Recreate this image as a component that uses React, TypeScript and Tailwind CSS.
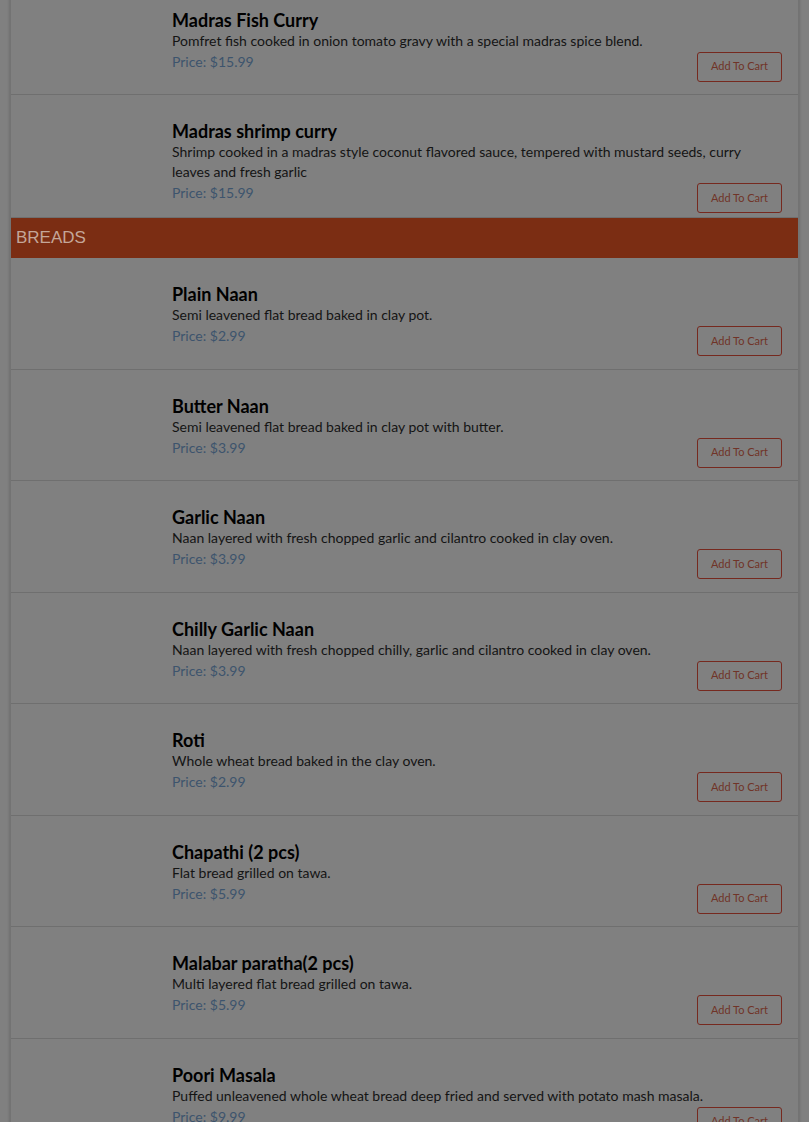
interface MenuItem {
    name: string;
    desc: string;
    price: string;
}

const curries: MenuItem[] = [
    { name: "Madras Fish Curry", desc: "Pomfret fish cooked in onion tomato gravy with a special madras spice blend.", price: "$15.99" },
    { name: "Madras shrimp curry", desc: "Shrimp cooked in a madras style coconut flavored sauce, tempered with mustard seeds, curry leaves and fresh garlic", price: "$15.99" },
];

const breads: MenuItem[] = [
    { name: "Plain Naan", desc: "Semi leavened flat bread baked in clay pot.", price: "$2.99" },
    { name: "Butter Naan", desc: "Semi leavened flat bread baked in clay pot with butter.", price: "$3.99" },
    { name: "Garlic Naan", desc: "Naan layered with fresh chopped garlic and cilantro cooked in clay oven.", price: "$3.99" },
    { name: "Chilly Garlic Naan", desc: "Naan layered with fresh chopped chilly, garlic and cilantro cooked in clay oven.", price: "$3.99" },
    { name: "Roti", desc: "Whole wheat bread baked in the clay oven.", price: "$2.99" },
    { name: "Chapathi (2 pcs)", desc: "Flat bread grilled on tawa.", price: "$5.99" },
    { name: "Malabar paratha(2 pcs)", desc: "Multi layered flat bread grilled on tawa.", price: "$5.99" },
    { name: "Poori Masala", desc: "Puffed unleavened whole wheat bread deep fried and served with potato mash masala.", price: "$9.99" },
];

const Row = ({ item }: { item: MenuItem }) => (
    <div className="flex min-h-[111.5px] border-b border-[#6f6f6f]">
        <div className="w-[161px] shrink-0"></div>
        <div className="grow pt-[25px] pr-[16px] pb-[4px]">
            <p className="text-[18px] leading-[22px] font-bold text-black">{item.name}</p>
            <p className="text-[14px] leading-[20px] text-[#141414]">{item.desc}</p>
            <div className="mt-[1px] flex items-start justify-between">
                <p className="text-[14px] leading-[20px] text-[#3d546d]">Price: {item.price}</p>
                <button className="w-[85px] h-[30px] border border-[#76291f] rounded-[3px] text-[11px] text-[#703428]">Add To Cart</button>
            </div>
        </div>
    </div>
)

export default function App() {
    return (
        <div className="min-h-screen bg-[#808080] overflow-hidden" style={{ fontFamily: "Lato, 'Noto Sans', sans-serif" }}>
            <div className="mx-[10px] -mt-[16.5px] border-x border-[#737373] shadow-[0_0_3px_rgba(0,0,0,0.25)]">
                {curries.map((c) => <Row key={c.name} item={c} />)}
                <div className="h-[40px] flex items-center pb-[1px] px-[5px] bg-[#7b2d13] text-[17px] text-[#c4a699]" style={{ fontFamily: "'Liberation Sans', Arial, sans-serif" }}>
                    BREADS
                </div>
                {breads.map((b) => <Row key={b.name} item={b} />)}
            </div>
        </div>
    )
}
